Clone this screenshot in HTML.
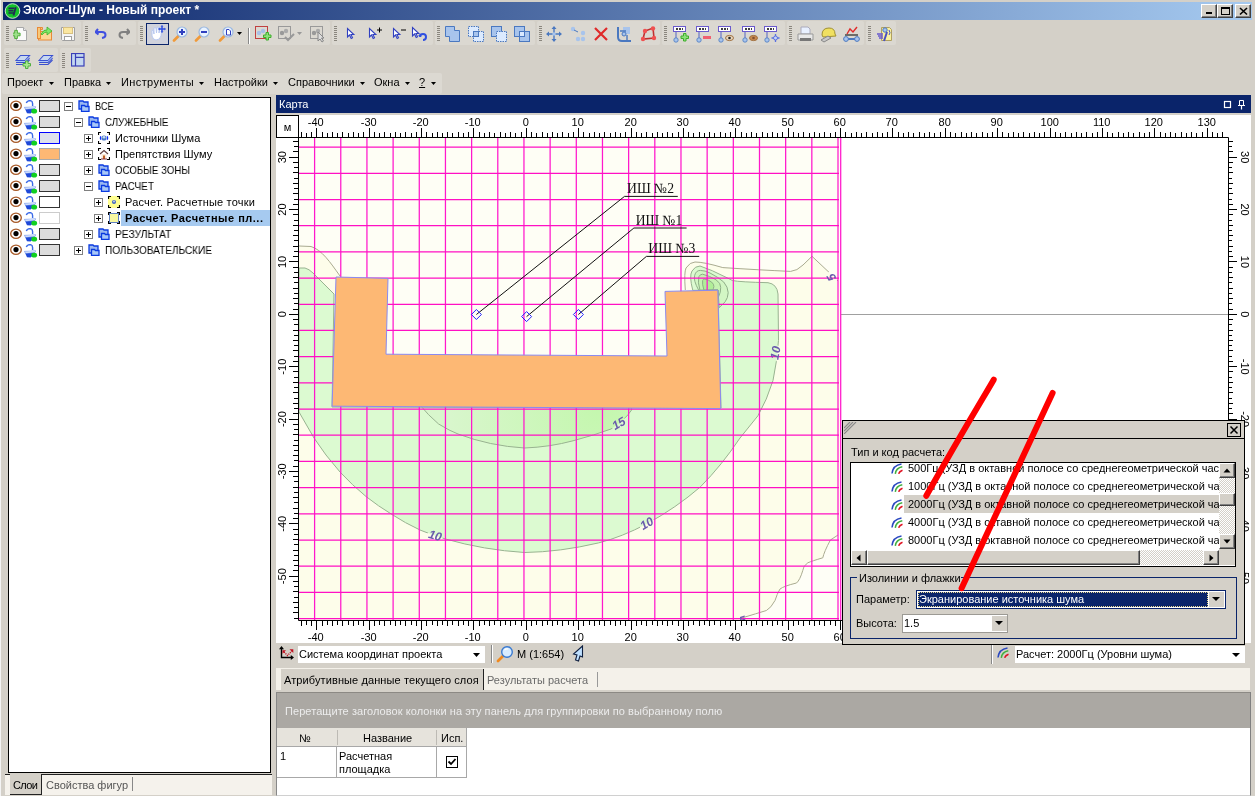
<!DOCTYPE html><html><head><meta charset="utf-8"><style>
*{box-sizing:border-box}
html,body{margin:0;padding:0}
body{width:1255px;height:797px;overflow:hidden;position:relative;background:#d4d0c8;font-family:"Liberation Sans",sans-serif;font-size:11px;color:#000}
.abs{position:absolute}
.t{position:absolute;white-space:nowrap;line-height:13px;will-change:transform}
</style></head><body>
<div class="abs" style="left:0;top:0;width:1px;height:797px;background:#f4f4f4"></div>
<div class="abs" style="left:3px;top:2px;width:1249px;height:18px;background:linear-gradient(to right,#0a246a,#a6caf0)"></div>
<svg class="abs" style="left:4px;top:3px" width="17" height="16" viewBox="0 0 17 16" ><circle cx="8.5" cy="8" r="7.3" fill="#13c12a" stroke="#c8e8c8" stroke-width="1"/><path d="M4.5 5.2h6M4.5 7.6h5M4.5 10h6" stroke="#222a55" stroke-width="1.6"/><path d="M11.8 4.2 L9.5 12.5" stroke="#222a55" stroke-width="1.8"/></svg>
<div class="t" style="left:23px;top:3px;color:#fff;font-weight:bold;font-size:12px;line-height:15px">Эколог-Шум - Новый проект *</div>
<div class="abs" style="left:1201px;top:4px;width:16px;height:14px;background:#d4d0c8;border-top:1px solid #fff;border-left:1px solid #fff;border-right:1px solid #404040;border-bottom:1px solid #404040;box-shadow:inset -1px -1px 0 #808080"><svg class="abs" style="left:3px;top:7px" width="8" height="3" viewBox="0 0 8 3" ><rect x="1" y="0" width="6" height="2" fill="#000"/></svg></div>
<div class="abs" style="left:1217px;top:4px;width:16px;height:14px;background:#d4d0c8;border-top:1px solid #fff;border-left:1px solid #fff;border-right:1px solid #404040;border-bottom:1px solid #404040;box-shadow:inset -1px -1px 0 #808080"><svg class="abs" style="left:2px;top:1px" width="10" height="10" viewBox="0 0 10 10" ><rect x="1.5" y="1.5" width="8" height="7" fill="none" stroke="#000" stroke-width="1"/><rect x="1" y="1" width="9" height="2" fill="#000"/></svg></div>
<div class="abs" style="left:1235px;top:4px;width:16px;height:14px;background:#d4d0c8;border-top:1px solid #fff;border-left:1px solid #fff;border-right:1px solid #404040;border-bottom:1px solid #404040;box-shadow:inset -1px -1px 0 #808080"><svg class="abs" style="left:3px;top:2px" width="9" height="9" viewBox="0 0 9 9" ><path d="M1 1L8 7.5M8 1L1 7.5" stroke="#000" stroke-width="1.6"/></svg></div>
<div class="abs" style="left:4px;top:21px;width:77px;height:24px;background:#dbd8d1;border-radius:2px"></div>
<svg class="abs" style="left:6px;top:26px" width="3" height="16" viewBox="0 0 3 16" ><rect x="0" y="0" width="3" height="1" fill="#8a867e"/><rect x="0" y="2" width="3" height="1" fill="#8a867e"/><rect x="0" y="4" width="3" height="1" fill="#8a867e"/><rect x="0" y="6" width="3" height="1" fill="#8a867e"/><rect x="0" y="8" width="3" height="1" fill="#8a867e"/><rect x="0" y="10" width="3" height="1" fill="#8a867e"/><rect x="0" y="12" width="3" height="1" fill="#8a867e"/><rect x="0" y="14" width="3" height="1" fill="#8a867e"/></svg>
<div class="abs" style="left:83px;top:21px;width:53px;height:24px;background:#dbd8d1;border-radius:2px"></div>
<svg class="abs" style="left:85px;top:26px" width="3" height="16" viewBox="0 0 3 16" ><rect x="0" y="0" width="3" height="1" fill="#8a867e"/><rect x="0" y="2" width="3" height="1" fill="#8a867e"/><rect x="0" y="4" width="3" height="1" fill="#8a867e"/><rect x="0" y="6" width="3" height="1" fill="#8a867e"/><rect x="0" y="8" width="3" height="1" fill="#8a867e"/><rect x="0" y="10" width="3" height="1" fill="#8a867e"/><rect x="0" y="12" width="3" height="1" fill="#8a867e"/><rect x="0" y="14" width="3" height="1" fill="#8a867e"/></svg>
<div class="abs" style="left:138px;top:21px;width:192px;height:24px;background:#dbd8d1;border-radius:2px"></div>
<svg class="abs" style="left:140px;top:26px" width="3" height="16" viewBox="0 0 3 16" ><rect x="0" y="0" width="3" height="1" fill="#8a867e"/><rect x="0" y="2" width="3" height="1" fill="#8a867e"/><rect x="0" y="4" width="3" height="1" fill="#8a867e"/><rect x="0" y="6" width="3" height="1" fill="#8a867e"/><rect x="0" y="8" width="3" height="1" fill="#8a867e"/><rect x="0" y="10" width="3" height="1" fill="#8a867e"/><rect x="0" y="12" width="3" height="1" fill="#8a867e"/><rect x="0" y="14" width="3" height="1" fill="#8a867e"/></svg>
<div class="abs" style="left:332px;top:21px;width:101px;height:24px;background:#dbd8d1;border-radius:2px"></div>
<svg class="abs" style="left:334px;top:26px" width="3" height="16" viewBox="0 0 3 16" ><rect x="0" y="0" width="3" height="1" fill="#8a867e"/><rect x="0" y="2" width="3" height="1" fill="#8a867e"/><rect x="0" y="4" width="3" height="1" fill="#8a867e"/><rect x="0" y="6" width="3" height="1" fill="#8a867e"/><rect x="0" y="8" width="3" height="1" fill="#8a867e"/><rect x="0" y="10" width="3" height="1" fill="#8a867e"/><rect x="0" y="12" width="3" height="1" fill="#8a867e"/><rect x="0" y="14" width="3" height="1" fill="#8a867e"/></svg>
<div class="abs" style="left:435px;top:21px;width:100px;height:24px;background:#dbd8d1;border-radius:2px"></div>
<svg class="abs" style="left:437px;top:26px" width="3" height="16" viewBox="0 0 3 16" ><rect x="0" y="0" width="3" height="1" fill="#8a867e"/><rect x="0" y="2" width="3" height="1" fill="#8a867e"/><rect x="0" y="4" width="3" height="1" fill="#8a867e"/><rect x="0" y="6" width="3" height="1" fill="#8a867e"/><rect x="0" y="8" width="3" height="1" fill="#8a867e"/><rect x="0" y="10" width="3" height="1" fill="#8a867e"/><rect x="0" y="12" width="3" height="1" fill="#8a867e"/><rect x="0" y="14" width="3" height="1" fill="#8a867e"/></svg>
<div class="abs" style="left:537px;top:21px;width:123px;height:24px;background:#dbd8d1;border-radius:2px"></div>
<svg class="abs" style="left:539px;top:26px" width="3" height="16" viewBox="0 0 3 16" ><rect x="0" y="0" width="3" height="1" fill="#8a867e"/><rect x="0" y="2" width="3" height="1" fill="#8a867e"/><rect x="0" y="4" width="3" height="1" fill="#8a867e"/><rect x="0" y="6" width="3" height="1" fill="#8a867e"/><rect x="0" y="8" width="3" height="1" fill="#8a867e"/><rect x="0" y="10" width="3" height="1" fill="#8a867e"/><rect x="0" y="12" width="3" height="1" fill="#8a867e"/><rect x="0" y="14" width="3" height="1" fill="#8a867e"/></svg>
<div class="abs" style="left:662px;top:21px;width:123px;height:24px;background:#dbd8d1;border-radius:2px"></div>
<svg class="abs" style="left:664px;top:26px" width="3" height="16" viewBox="0 0 3 16" ><rect x="0" y="0" width="3" height="1" fill="#8a867e"/><rect x="0" y="2" width="3" height="1" fill="#8a867e"/><rect x="0" y="4" width="3" height="1" fill="#8a867e"/><rect x="0" y="6" width="3" height="1" fill="#8a867e"/><rect x="0" y="8" width="3" height="1" fill="#8a867e"/><rect x="0" y="10" width="3" height="1" fill="#8a867e"/><rect x="0" y="12" width="3" height="1" fill="#8a867e"/><rect x="0" y="14" width="3" height="1" fill="#8a867e"/></svg>
<div class="abs" style="left:787px;top:21px;width:77px;height:24px;background:#dbd8d1;border-radius:2px"></div>
<svg class="abs" style="left:789px;top:26px" width="3" height="16" viewBox="0 0 3 16" ><rect x="0" y="0" width="3" height="1" fill="#8a867e"/><rect x="0" y="2" width="3" height="1" fill="#8a867e"/><rect x="0" y="4" width="3" height="1" fill="#8a867e"/><rect x="0" y="6" width="3" height="1" fill="#8a867e"/><rect x="0" y="8" width="3" height="1" fill="#8a867e"/><rect x="0" y="10" width="3" height="1" fill="#8a867e"/><rect x="0" y="12" width="3" height="1" fill="#8a867e"/><rect x="0" y="14" width="3" height="1" fill="#8a867e"/></svg>
<div class="abs" style="left:866px;top:21px;width:30px;height:24px;background:#dbd8d1;border-radius:2px"></div>
<svg class="abs" style="left:868px;top:26px" width="3" height="16" viewBox="0 0 3 16" ><rect x="0" y="0" width="3" height="1" fill="#8a867e"/><rect x="0" y="2" width="3" height="1" fill="#8a867e"/><rect x="0" y="4" width="3" height="1" fill="#8a867e"/><rect x="0" y="6" width="3" height="1" fill="#8a867e"/><rect x="0" y="8" width="3" height="1" fill="#8a867e"/><rect x="0" y="10" width="3" height="1" fill="#8a867e"/><rect x="0" y="12" width="3" height="1" fill="#8a867e"/><rect x="0" y="14" width="3" height="1" fill="#8a867e"/></svg>
<div class="abs" style="left:4px;top:48px;width:54px;height:24px;background:#dbd8d1;border-radius:2px"></div>
<svg class="abs" style="left:6px;top:53px" width="3" height="16" viewBox="0 0 3 16" ><rect x="0" y="0" width="3" height="1" fill="#8a867e"/><rect x="0" y="2" width="3" height="1" fill="#8a867e"/><rect x="0" y="4" width="3" height="1" fill="#8a867e"/><rect x="0" y="6" width="3" height="1" fill="#8a867e"/><rect x="0" y="8" width="3" height="1" fill="#8a867e"/><rect x="0" y="10" width="3" height="1" fill="#8a867e"/><rect x="0" y="12" width="3" height="1" fill="#8a867e"/><rect x="0" y="14" width="3" height="1" fill="#8a867e"/></svg>
<div class="abs" style="left:60px;top:48px;width:31px;height:24px;background:#dbd8d1;border-radius:2px"></div>
<svg class="abs" style="left:62px;top:53px" width="3" height="16" viewBox="0 0 3 16" ><rect x="0" y="0" width="3" height="1" fill="#8a867e"/><rect x="0" y="2" width="3" height="1" fill="#8a867e"/><rect x="0" y="4" width="3" height="1" fill="#8a867e"/><rect x="0" y="6" width="3" height="1" fill="#8a867e"/><rect x="0" y="8" width="3" height="1" fill="#8a867e"/><rect x="0" y="10" width="3" height="1" fill="#8a867e"/><rect x="0" y="12" width="3" height="1" fill="#8a867e"/><rect x="0" y="14" width="3" height="1" fill="#8a867e"/></svg>
<svg class="abs" style="left:13px;top:26px" width="16" height="16" viewBox="0 0 16 16" ><path d="M3.5 1.5h7l3 3v10h-10z" fill="#fafafa" stroke="#a8a8a8"/><path d="M10.5 1.5v3h3" fill="#e8e8e8" stroke="#a8a8a8"/><path d="M3 6h3v3h3v3h-3v3h-3v-3h-3v-3h3z" transform="translate(-1,-1) scale(0.9)" fill="#9de08a" stroke="#4aa832"/></svg>
<svg class="abs" style="left:37px;top:26px" width="16" height="16" viewBox="0 0 16 16" ><path d="M0.5 1.5h5v2h-5z" fill="#f8c878" stroke="#e88a38"/><rect x="1.5" y="5.5" width="13" height="8.5" fill="#fcd894" stroke="#e88a38"/><rect x="0.5" y="1.5" width="3" height="11" fill="#f8c878" stroke="#e88a38"/><path d="M4 8 Q7 3 10 4 L10 1 L15 5 L10 9 L10 6 Q7 6 5 9z" fill="#7ee86a" stroke="#3cb02a" stroke-width="0.8"/></svg>
<svg class="abs" style="left:60px;top:26px" width="16" height="16" viewBox="0 0 16 16" ><path d="M1.5 1.5h13v13h-12l-1-1z" fill="#f4f4f4" stroke="#a0a0a0"/><rect x="3.5" y="1.5" width="9" height="6" fill="#fbe7a0" stroke="#d8c080"/><rect x="4.5" y="10.5" width="7" height="4" fill="#fff" stroke="#a0a0a0"/></svg>
<svg class="abs" style="left:95px;top:27px" width="12" height="12" viewBox="0 0 12 12" ><path d="M3 2 L0.5 5 L3.5 7.5 M1 5 H7 Q10.5 5 10.5 8 Q10.5 10.5 7 11" fill="none" stroke="#4050e0" stroke-width="2"/></svg>
<svg class="abs" style="left:118px;top:27px" width="12" height="12" viewBox="0 0 12 12" ><path d="M9 2 L11.5 5 L8.5 7.5 M11 5 H5 Q1.5 5 1.5 8 Q1.5 10.5 5 11" fill="none" stroke="#808080" stroke-width="2"/></svg>
<div class="abs" style="left:146px;top:23px;width:23px;height:22px;background:#d0d2dc;border:1px solid #0a246a"></div>
<svg class="abs" style="left:149px;top:25px" width="18" height="17" viewBox="0 0 18 17" ><path d="M3 8 Q2 5 4 5 L5 9 L5 3 Q6 2 7 3 L7.5 8 L8 2.5 Q9 1.5 10 2.5 L10 8 L11 4 Q12 3.5 12.5 4.5 L12 11 Q11 15 7 15 Q4 15 3 11z" fill="#fff" stroke="#b8c8f0" stroke-width="1"/><path d="M13 1v6M10 4h6" stroke="#3050e0" stroke-width="1.5"/><path d="M13 0l-1.5 1.5h3zM13 8l-1.5-1.5h3zM9 4l1.5-1.5v3zM17 4l-1.5-1.5v3z" fill="#3050e0"/></svg>
<svg class="abs" style="left:172px;top:26px" width="16" height="16" viewBox="0 0 16 16" ><path d="M2 14.5 L6.5 10" stroke="#f09a3a" stroke-width="2.6" stroke-linecap="round"/><circle cx="10" cy="6" r="5" fill="#e8f2ff" stroke="#9ab8e0" stroke-width="1.2"/><path d="M10 3v6M7 6h6" stroke="#3040c0" stroke-width="2"/></svg>
<svg class="abs" style="left:194px;top:26px" width="16" height="16" viewBox="0 0 16 16" ><path d="M2 14.5 L6.5 10" stroke="#f09a3a" stroke-width="2.6" stroke-linecap="round"/><circle cx="10" cy="6" r="5" fill="#e8f2ff" stroke="#9ab8e0" stroke-width="1.2"/><path d="M7 6h6" stroke="#3040c0" stroke-width="2"/></svg>
<svg class="abs" style="left:218px;top:26px" width="16" height="16" viewBox="0 0 16 16" ><path d="M2 14.5 L6.5 10" stroke="#f09a3a" stroke-width="2.6" stroke-linecap="round"/><circle cx="10" cy="6" r="5" fill="#e8f2ff" stroke="#9ab8e0" stroke-width="1.2"/><path d="M8.5 3.5h2.5l1.5 1.5v4h-4z" fill="#fff" stroke="#3040c0"/></svg>
<svg class="abs" style="left:237px;top:32px" width="6" height="4" viewBox="0 0 6 4" ><path d="M0 0h5l-2.5 3z" fill="#000"/></svg>
<div class="abs" style="left:248px;top:28px;width:1px;height:16px;background:#888"></div><div class="abs" style="left:249px;top:28px;width:1px;height:16px;background:#fff"></div>
<svg class="abs" style="left:255px;top:26px" width="17" height="17" viewBox="0 0 17 17" ><rect x="0.5" y="0.5" width="12" height="12" fill="none" stroke="#c04040"/><circle cx="4" cy="7" r="2.2" fill="#a8c0e8"/><circle cx="8" cy="5" r="2.2" fill="#a8c0e8"/><path d="M10 9h2.5v-2.5h2.5v2.5h2.5v2.5h-2.5v2.5h-2.5v-2.5h-2.5z" transform="translate(-1.5,0)" fill="#8de07a" stroke="#3cae2a"/></svg>
<svg class="abs" style="left:278px;top:26px" width="17" height="17" viewBox="0 0 17 17" ><rect x="0.5" y="0.5" width="12" height="12" fill="none" stroke="#999"/><circle cx="4" cy="7" r="2.2" fill="#999"/><circle cx="8" cy="5" r="2.2" fill="#aaa"/><path d="M7 11 L10 14 L16 8" fill="none" stroke="#999" stroke-width="2"/></svg>
<svg class="abs" style="left:297px;top:32px" width="6" height="4" viewBox="0 0 6 4" ><path d="M0 0h5l-2.5 3z" fill="#999"/></svg>
<svg class="abs" style="left:310px;top:26px" width="17" height="17" viewBox="0 0 17 17" ><rect x="0.5" y="0.5" width="12" height="12" fill="none" stroke="#999"/><circle cx="4" cy="7" r="2.2" fill="#999"/><circle cx="8" cy="5" r="2.2" fill="#aaa"/><path d="M8 6 L8 15 L10 13 L12 16 L13.5 15 L11.5 12 L14 12z" fill="#ddd" stroke="#888"/></svg>
<svg class="abs" style="left:346px;top:27px" width="16" height="15" viewBox="0 0 16 15" ><path d="M1.5 1.5 L1.5 10 L3.5 8 L5.2 11.5 L6.5 10.8 L4.9 7.5 L7.8 7.5z" fill="#fff" stroke="#3040c0" stroke-width="1.1"/></svg>
<svg class="abs" style="left:368px;top:27px" width="16" height="15" viewBox="0 0 16 15" ><path d="M1.5 1.5 L1.5 10 L3.5 8 L5.2 11.5 L6.5 10.8 L4.9 7.5 L7.8 7.5z" fill="#fff" stroke="#3040c0" stroke-width="1.1"/><path d="M9 3h5M11.5 0.5v5" stroke="#000" stroke-width="1"/></svg>
<svg class="abs" style="left:392px;top:27px" width="16" height="15" viewBox="0 0 16 15" ><path d="M1.5 1.5 L1.5 10 L3.5 8 L5.2 11.5 L6.5 10.8 L4.9 7.5 L7.8 7.5z" fill="#fff" stroke="#3040c0" stroke-width="1.1"/><path d="M9 3h5" stroke="#000" stroke-width="1"/></svg>
<svg class="abs" style="left:411px;top:26px" width="18" height="17" viewBox="0 0 18 17" ><path d="M1.5 1.5 L1.5 10 L3.5 8 L5.2 11.5 L6.5 10.8 L4.9 7.5 L7.8 7.5z" fill="#fff" stroke="#3040c0" stroke-width="1.1"/><path d="M9 11 Q9 8 12 8 Q15 8 15 11 Q15 14 12 14" fill="none" stroke="#3050e0" stroke-width="2"/><path d="M7 10l2.5-2.5 1 3z" fill="#3050e0"/></svg>
<svg class="abs" style="left:445px;top:26px" width="17" height="17" viewBox="0 0 17 17" ><path d="M0.5 0.5h9v4h5v11h-10v-5h-4z" fill="#a8c4ec" stroke="#4a78c0"/></svg>
<svg class="abs" style="left:468px;top:26px" width="17" height="17" viewBox="0 0 17 17" ><rect x="0.5" y="0.5" width="10" height="10" fill="#dbeaff" stroke="#4a78c0" stroke-dasharray="1.5 1"/><rect x="5.5" y="5.5" width="10" height="10" fill="#dbeaff" stroke="#4a78c0" stroke-dasharray="1.5 1"/><rect x="5.5" y="5.5" width="5" height="5" fill="#a8c4ec" stroke="#4a78c0"/></svg>
<svg class="abs" style="left:491px;top:26px" width="17" height="17" viewBox="0 0 17 17" ><rect x="0.5" y="0.5" width="10" height="10" fill="#a8c4ec" stroke="#4a78c0"/><rect x="5.5" y="5.5" width="10" height="10" fill="#dbeaff" stroke="#4a78c0" stroke-dasharray="1.5 1"/></svg>
<svg class="abs" style="left:514px;top:26px" width="17" height="17" viewBox="0 0 17 17" ><rect x="0.5" y="0.5" width="10" height="10" fill="#a8c4ec" stroke="#4a78c0"/><rect x="5.5" y="5.5" width="10" height="10" fill="#a8c4ec" stroke="#4a78c0"/><rect x="5.5" y="5.5" width="5" height="5" fill="#dbeaff" stroke="#4a78c0"/></svg>
<svg class="abs" style="left:546px;top:26px" width="17" height="17" viewBox="0 0 17 17" ><path d="M8 1v14M1 8h14" stroke="#4a78c0" stroke-width="1.4"/><path d="M8 0l-2.5 3h5zM8 16l-2.5-3h5zM0 8l3-2.5v5zM16 8l-3-2.5v5z" fill="#4a78c0"/><circle cx="8" cy="8" r="1.8" fill="#a8c4ec"/></svg>
<svg class="abs" style="left:570px;top:26px" width="17" height="17" viewBox="0 0 17 17" ><circle cx="3" cy="3" r="2.2" fill="#a8c4ec"/><circle cx="13" cy="7" r="2.2" fill="#a8c4ec"/><circle cx="8" cy="13" r="2.2" fill="#a8c4ec"/><circle cx="13" cy="13" r="2.2" fill="#a8c4ec"/><path d="M4 4 L8 6" stroke="#4a78c0"/></svg>
<svg class="abs" style="left:593px;top:26px" width="17" height="17" viewBox="0 0 17 17" ><path d="M2 2 L14 14 M14 2 L2 14" stroke="#e02a2a" stroke-width="2.2"/></svg>
<svg class="abs" style="left:616px;top:26px" width="17" height="17" viewBox="0 0 17 17" ><path d="M2 1v10q0 4 4 4h9" fill="none" stroke="#4a78c0" stroke-width="2"/><rect x="7" y="1" width="7" height="7" fill="#a8c4ec"/><path d="M4 5h6M11 9v5" stroke="#4a78c0" stroke-width="1.4"/><circle cx="8" cy="8" r="2" fill="#a8c4ec" stroke="#4a78c0"/></svg>
<svg class="abs" style="left:640px;top:26px" width="17" height="17" viewBox="0 0 17 17" ><path d="M3 13 L5 5 L13 2 L14 12z" fill="none" stroke="#c03030" stroke-width="1.6"/><circle cx="3" cy="13" r="2.2" fill="#f05050"/><circle cx="5" cy="5" r="2.2" fill="#f05050"/><circle cx="13" cy="2.5" r="2.2" fill="#f05050"/><circle cx="14" cy="12" r="2.2" fill="#f05050"/></svg>
<svg class="abs" style="left:672px;top:26px" width="18" height="17" viewBox="0 0 18 17" ><rect x="1.5" y="0.5" width="12" height="5" fill="#fff" stroke="#6a5acd"/><path d="M4 3h7" stroke="#000" stroke-width="1.5" stroke-dasharray="2 1"/><path d="M4 6v8" stroke="#6a78c8" stroke-width="1.2"/><circle cx="4" cy="14" r="2.2" fill="#a8c4ec" stroke="#4a78c0" stroke-width="0.8"/><path d="M10 10h2.5v-2.5h2.5v2.5h2.5v2.5h-2.5v2.5h-2.5v-2.5h-2.5z" transform="translate(-1,0)" fill="#8de07a" stroke="#3cae2a"/></svg>
<svg class="abs" style="left:695px;top:26px" width="18" height="17" viewBox="0 0 18 17" ><rect x="1.5" y="0.5" width="12" height="5" fill="#fff" stroke="#6a5acd"/><path d="M4 3h7" stroke="#000" stroke-width="1.5" stroke-dasharray="2 1"/><path d="M4 6v8" stroke="#6a78c8" stroke-width="1.2"/><circle cx="4" cy="14" r="2.2" fill="#a8c4ec" stroke="#4a78c0" stroke-width="0.8"/><rect x="8" y="10" width="8" height="3" fill="#f06070"/></svg>
<svg class="abs" style="left:717px;top:26px" width="18" height="17" viewBox="0 0 18 17" ><rect x="1.5" y="0.5" width="12" height="5" fill="#fff" stroke="#6a5acd"/><path d="M4 3h7" stroke="#000" stroke-width="1.5" stroke-dasharray="2 1"/><path d="M4 6v8" stroke="#6a78c8" stroke-width="1.2"/><circle cx="4" cy="14" r="2.2" fill="#a8c4ec" stroke="#4a78c0" stroke-width="0.8"/><ellipse cx="12.5" cy="12" rx="4" ry="2.6" fill="#e8d8c0" stroke="#a07040"/><circle cx="12.5" cy="12" r="1.3" fill="#222"/></svg>
<svg class="abs" style="left:741px;top:26px" width="18" height="17" viewBox="0 0 18 17" ><rect x="1.5" y="0.5" width="12" height="5" fill="#fff" stroke="#6a5acd"/><path d="M4 3h7" stroke="#000" stroke-width="1.5" stroke-dasharray="2 1"/><path d="M4 6v8" stroke="#6a78c8" stroke-width="1.2"/><circle cx="4" cy="14" r="2.2" fill="#a8c4ec" stroke="#4a78c0" stroke-width="0.8"/><ellipse cx="12.5" cy="12" rx="4" ry="2.6" fill="#c88a50" stroke="#a07040"/><circle cx="12.5" cy="12" r="1.3" fill="#805030"/></svg>
<svg class="abs" style="left:763px;top:26px" width="18" height="17" viewBox="0 0 18 17" ><rect x="1.5" y="0.5" width="12" height="5" fill="#fff" stroke="#6a5acd"/><path d="M4 3h7" stroke="#000" stroke-width="1.5" stroke-dasharray="2 1"/><path d="M4 6v8" stroke="#6a78c8" stroke-width="1.2"/><circle cx="4" cy="14" r="2.2" fill="#a8c4ec" stroke="#4a78c0" stroke-width="0.8"/><path d="M12.5 8v8M8.5 12h8" stroke="#5a70e0" stroke-width="1.3"/><circle cx="12.5" cy="12" r="2" fill="#c8d4f8" stroke="#5a70e0"/></svg>
<svg class="abs" style="left:797px;top:26px" width="17" height="17" viewBox="0 0 17 17" ><path d="M4 1h7l2 2v5h-9z" fill="#e8f0ff" stroke="#aab"/><path d="M1 8h15v6h-15z" fill="#e8e8e8" stroke="#999"/><rect x="3" y="12" width="11" height="3" fill="#777"/></svg>
<svg class="abs" style="left:820px;top:26px" width="17" height="17" viewBox="0 0 17 17" ><path d="M2 9 Q2 2 9 2 Q15 2 15 8 L16 10 L3 11z" fill="#f0e060" stroke="#a09030"/><path d="M1 14 L8 10 L11 12 L4 16z" fill="#c8c8c8" stroke="#888"/></svg>
<svg class="abs" style="left:843px;top:26px" width="17" height="17" viewBox="0 0 17 17" ><path d="M4 8 L7 3 L10 6 L14 1" fill="none" stroke="#e02a2a" stroke-width="1.4"/><path d="M2 9h13" stroke="#000"/><path d="M3 13h11" stroke="#4a78c0" stroke-width="2"/><circle cx="3" cy="13" r="2.4" fill="#a8c4ec" stroke="#4a78c0"/><circle cx="14" cy="13" r="2.4" fill="#a8c4ec" stroke="#4a78c0"/></svg>
<svg class="abs" style="left:876px;top:26px" width="17" height="17" viewBox="0 0 17 17" ><path d="M5.5 1.5h8l2 2v11h-10z" fill="#f8f0a0" stroke="#b0a060"/><circle cx="9" cy="4" r="2.2" fill="#a8c4ec" stroke="#4a78c0"/><path d="M1 8h6M2 10h5M3 12h4" stroke="#6a5acd" stroke-width="1.3"/><path d="M11 6 L8 15" stroke="#4a50c0" stroke-width="2"/><path d="M13 4 q2 3 0 5" fill="none" stroke="#4a50c0"/></svg>
<svg class="abs" style="left:15px;top:54px" width="17" height="17" viewBox="0 0 17 17" ><path d="M1 6.5 L5.5 1.5 H14.5 L10 6.5z" fill="#c8d8f0" stroke="#3a50d0" stroke-width="1.1"/><path d="M1 8.5H10L14.5 4" fill="none" stroke="#3a50d0" stroke-width="1.2"/><path d="M1 10.5H10L14.5 6" fill="none" stroke="#3a50d0" stroke-width="1.2"/><path d="M1.5 7.5H10L14 3.5" fill="none" stroke="#a8c8f8" stroke-width="0.9"/><path d="M8 9.5h2.5v-2.5h2.5v2.5h2.5v2.5h-2.5v2.5h-2.5v-2.5h-2.5z" fill="#a8e890" stroke="#50b040"/></svg>
<svg class="abs" style="left:38px;top:54px" width="16" height="14" viewBox="0 0 16 14" ><path d="M1 6.5 L5.5 1.5 H14.5 L10 6.5z" fill="#c8d8f0" stroke="#3a50d0" stroke-width="1.1"/><path d="M1 8.5H10L14.5 4" fill="none" stroke="#3a50d0" stroke-width="1.2"/><path d="M1 10.5H10L14.5 6" fill="none" stroke="#3a50d0" stroke-width="1.2"/><path d="M1.5 7.5H10L14 3.5" fill="none" stroke="#a8c8f8" stroke-width="0.9"/></svg>
<svg class="abs" style="left:71px;top:53px" width="15" height="15" viewBox="0 0 15 15" ><rect x="0.5" y="0.5" width="12.5" height="12.5" fill="#c4d8f0" stroke="#3a40b8" stroke-width="1.2"/><path d="M4.5 4.3h8.5M4.5 0.5v12.5" stroke="#3a40b8" stroke-width="1.2"/></svg>
<div class="abs" style="left:2px;top:73px;width:440px;height:21px;background:#dcd9d2;border-radius:2px"></div>
<div class="t" style="left:7.4px;top:76px;letter-spacing:0px">Проект</div>
<svg class="abs" style="left:49px;top:82px" width="6" height="4" viewBox="0 0 6 4" ><path d="M0 0h5l-2.5 3z" fill="#000"/></svg>
<div class="t" style="left:63.5px;top:76px;letter-spacing:0px">Правка</div>
<svg class="abs" style="left:106px;top:82px" width="6" height="4" viewBox="0 0 6 4" ><path d="M0 0h5l-2.5 3z" fill="#000"/></svg>
<div class="t" style="left:121.0px;top:76px;letter-spacing:0.4px">Инструменты</div>
<svg class="abs" style="left:199px;top:82px" width="6" height="4" viewBox="0 0 6 4" ><path d="M0 0h5l-2.5 3z" fill="#000"/></svg>
<div class="t" style="left:213.5px;top:76px;letter-spacing:0px">Настройки</div>
<svg class="abs" style="left:273px;top:82px" width="6" height="4" viewBox="0 0 6 4" ><path d="M0 0h5l-2.5 3z" fill="#000"/></svg>
<div class="t" style="left:288.0px;top:76px;letter-spacing:0px">Справочники</div>
<svg class="abs" style="left:360px;top:82px" width="6" height="4" viewBox="0 0 6 4" ><path d="M0 0h5l-2.5 3z" fill="#000"/></svg>
<div class="t" style="left:374.0px;top:76px;letter-spacing:0px">Окна</div>
<svg class="abs" style="left:405px;top:82px" width="6" height="4" viewBox="0 0 6 4" ><path d="M0 0h5l-2.5 3z" fill="#000"/></svg>
<div class="t" style="left:419.0px;top:76px;text-decoration:underline">?</div>
<svg class="abs" style="left:431px;top:82px" width="6" height="4" viewBox="0 0 6 4" ><path d="M0 0h5l-2.5 3z" fill="#000"/></svg>
<div class="abs" style="left:8px;top:97px;width:263px;height:676px;background:#fff;border:1px solid #000"></div>
<svg class="abs" style="left:10px;top:100px" width="13" height="12" viewBox="0 0 13 12" ><ellipse cx="6" cy="5.7" rx="5.3" ry="4.6" fill="#fff" stroke="#a85a28" stroke-width="1.35"/><circle cx="6" cy="5.6" r="2.6" fill="#000"/></svg>
<svg class="abs" style="left:24px;top:100px" width="14" height="14" viewBox="0 0 14 14" ><path d="M2.3 3 Q3 0.6 6.2 0.6 Q8.6 0.8 8.6 3.5 V6" fill="none" stroke="#3a6ae8" stroke-width="1.4"/><path d="M0.4 7.3 L11.8 6.8 L9 11.5 L6.5 13.5 L3 13.3z" fill="#1e48d8"/><path d="M0.4 7.3 L11.8 6.8 L11 8.6 L1.5 9.2z" fill="#e6eeff" stroke="#8aa8f0" stroke-width="0.6"/><ellipse cx="10.2" cy="11.2" rx="2.9" ry="2.4" fill="#10d020"/></svg>
<div class="abs" style="left:39px;top:100px;width:21px;height:12px;background:#dcdcdc;border:1px solid #333"></div>
<svg class="abs" style="left:64px;top:102px" width="9" height="9" viewBox="0 0 9 9" ><rect x="0.5" y="0.5" width="8" height="8" fill="#fff" stroke="#808080"/><path d="M2 4.5h5" stroke="#000"/></svg>
<svg class="abs" style="left:78px;top:100px" width="12" height="12" viewBox="0 0 12 12" ><path d="M1 1h4l1 1h4v7h-9z" fill="#9ab8f0" stroke="#0a3ae0" stroke-width="1.3"/><path d="M3.5 5.5h3l1 1h3.5v5h-7.5z" fill="#a8c8f8" stroke="#0a3ae0" stroke-width="1.3"/></svg>
<div class="t" style="left:94.6px;top:100px;letter-spacing:0px;transform:scaleX(0.835);transform-origin:0 0">ВСЕ</div>
<svg class="abs" style="left:10px;top:116px" width="13" height="12" viewBox="0 0 13 12" ><ellipse cx="6" cy="5.7" rx="5.3" ry="4.6" fill="#fff" stroke="#a85a28" stroke-width="1.35"/><circle cx="6" cy="5.6" r="2.6" fill="#000"/></svg>
<svg class="abs" style="left:24px;top:116px" width="14" height="14" viewBox="0 0 14 14" ><path d="M2.3 3 Q3 0.6 6.2 0.6 Q8.6 0.8 8.6 3.5 V6" fill="none" stroke="#3a6ae8" stroke-width="1.4"/><path d="M0.4 7.3 L11.8 6.8 L9 11.5 L6.5 13.5 L3 13.3z" fill="#1e48d8"/><path d="M0.4 7.3 L11.8 6.8 L11 8.6 L1.5 9.2z" fill="#e6eeff" stroke="#8aa8f0" stroke-width="0.6"/><ellipse cx="10.2" cy="11.2" rx="2.9" ry="2.4" fill="#10d020"/></svg>
<div class="abs" style="left:39px;top:116px;width:21px;height:12px;background:#dcdcdc;border:1px solid #333"></div>
<svg class="abs" style="left:74px;top:118px" width="9" height="9" viewBox="0 0 9 9" ><rect x="0.5" y="0.5" width="8" height="8" fill="#fff" stroke="#808080"/><path d="M2 4.5h5" stroke="#000"/></svg>
<svg class="abs" style="left:88px;top:116px" width="12" height="12" viewBox="0 0 12 12" ><path d="M1 1h4l1 1h4v7h-9z" fill="#9ab8f0" stroke="#0a3ae0" stroke-width="1.3"/><path d="M3.5 5.5h3l1 1h3.5v5h-7.5z" fill="#a8c8f8" stroke="#0a3ae0" stroke-width="1.3"/></svg>
<div class="t" style="left:104.6px;top:116px;letter-spacing:0px;transform:scaleX(0.885);transform-origin:0 0">СЛУЖЕБНЫЕ</div>
<svg class="abs" style="left:10px;top:132px" width="13" height="12" viewBox="0 0 13 12" ><ellipse cx="6" cy="5.7" rx="5.3" ry="4.6" fill="#fff" stroke="#a85a28" stroke-width="1.35"/><circle cx="6" cy="5.6" r="2.6" fill="#000"/></svg>
<svg class="abs" style="left:24px;top:132px" width="14" height="14" viewBox="0 0 14 14" ><path d="M2.3 3 Q3 0.6 6.2 0.6 Q8.6 0.8 8.6 3.5 V6" fill="none" stroke="#3a6ae8" stroke-width="1.4"/><path d="M0.4 7.3 L11.8 6.8 L9 11.5 L6.5 13.5 L3 13.3z" fill="#1e48d8"/><path d="M0.4 7.3 L11.8 6.8 L11 8.6 L1.5 9.2z" fill="#e6eeff" stroke="#8aa8f0" stroke-width="0.6"/><ellipse cx="10.2" cy="11.2" rx="2.9" ry="2.4" fill="#10d020"/></svg>
<div class="abs" style="left:39px;top:132px;width:21px;height:12px;background:#dde0ec;border:1px solid #0000ff"></div>
<svg class="abs" style="left:84px;top:134px" width="9" height="9" viewBox="0 0 9 9" ><rect x="0.5" y="0.5" width="8" height="8" fill="#fff" stroke="#808080"/><path d="M2 4.5h5" stroke="#000"/><path d="M4.5 2v5" stroke="#000"/></svg>
<svg class="abs" style="left:98px;top:132px" width="12" height="12" viewBox="0 0 12 12" ><path d="M0.5 3V0.5H3M9 0.5h2.5V3M11.5 9v2.5H9M3 11.5H0.5V9" fill="none" stroke="#000" stroke-width="1.2"/><circle cx="6" cy="6" r="2.6" fill="#4a7ac8"/><circle cx="6" cy="5.3" r="1.3" fill="#cde"/><path d="M2.8 4.2 Q1.6 6 2.8 7.8M9.2 4.2 Q10.4 6 9.2 7.8" fill="none" stroke="#0020ff" stroke-width="1.1"/></svg>
<div class="t" style="left:114.6px;top:132px;letter-spacing:0px">Источники Шума</div>
<svg class="abs" style="left:10px;top:148px" width="13" height="12" viewBox="0 0 13 12" ><ellipse cx="6" cy="5.7" rx="5.3" ry="4.6" fill="#fff" stroke="#a85a28" stroke-width="1.35"/><circle cx="6" cy="5.6" r="2.6" fill="#000"/></svg>
<svg class="abs" style="left:24px;top:148px" width="14" height="14" viewBox="0 0 14 14" ><path d="M2.3 3 Q3 0.6 6.2 0.6 Q8.6 0.8 8.6 3.5 V6" fill="none" stroke="#3a6ae8" stroke-width="1.4"/><path d="M0.4 7.3 L11.8 6.8 L9 11.5 L6.5 13.5 L3 13.3z" fill="#1e48d8"/><path d="M0.4 7.3 L11.8 6.8 L11 8.6 L1.5 9.2z" fill="#e6eeff" stroke="#8aa8f0" stroke-width="0.6"/><ellipse cx="10.2" cy="11.2" rx="2.9" ry="2.4" fill="#10d020"/></svg>
<div class="abs" style="left:39px;top:148px;width:21px;height:12px;background:#fdb874;border:1px solid #aaa"></div>
<svg class="abs" style="left:84px;top:150px" width="9" height="9" viewBox="0 0 9 9" ><rect x="0.5" y="0.5" width="8" height="8" fill="#fff" stroke="#808080"/><path d="M2 4.5h5" stroke="#000"/><path d="M4.5 2v5" stroke="#000"/></svg>
<svg class="abs" style="left:98px;top:148px" width="12" height="12" viewBox="0 0 12 12" ><path d="M0.5 3V0.5H3M9 0.5h2.5V3M11.5 9v2.5H9M3 11.5H0.5V9" fill="none" stroke="#000" stroke-width="1.2"/><path d="M2 6 L6 2.5 L10 6" fill="none" stroke="#604040" stroke-width="1.2"/><rect x="3.5" y="6" width="5" height="5" fill="#f8e8d8"/><rect x="5" y="7.5" width="2" height="3.5" fill="#c06020"/><path d="M3 11h6" stroke="#803040"/></svg>
<div class="t" style="left:114.6px;top:148px;letter-spacing:0px">Препятствия Шуму</div>
<svg class="abs" style="left:10px;top:164px" width="13" height="12" viewBox="0 0 13 12" ><ellipse cx="6" cy="5.7" rx="5.3" ry="4.6" fill="#fff" stroke="#a85a28" stroke-width="1.35"/><circle cx="6" cy="5.6" r="2.6" fill="#000"/></svg>
<svg class="abs" style="left:24px;top:164px" width="14" height="14" viewBox="0 0 14 14" ><path d="M2.3 3 Q3 0.6 6.2 0.6 Q8.6 0.8 8.6 3.5 V6" fill="none" stroke="#3a6ae8" stroke-width="1.4"/><path d="M0.4 7.3 L11.8 6.8 L9 11.5 L6.5 13.5 L3 13.3z" fill="#1e48d8"/><path d="M0.4 7.3 L11.8 6.8 L11 8.6 L1.5 9.2z" fill="#e6eeff" stroke="#8aa8f0" stroke-width="0.6"/><ellipse cx="10.2" cy="11.2" rx="2.9" ry="2.4" fill="#10d020"/></svg>
<div class="abs" style="left:39px;top:164px;width:21px;height:12px;background:#dcdcdc;border:1px solid #333"></div>
<svg class="abs" style="left:84px;top:166px" width="9" height="9" viewBox="0 0 9 9" ><rect x="0.5" y="0.5" width="8" height="8" fill="#fff" stroke="#808080"/><path d="M2 4.5h5" stroke="#000"/><path d="M4.5 2v5" stroke="#000"/></svg>
<svg class="abs" style="left:98px;top:164px" width="12" height="12" viewBox="0 0 12 12" ><path d="M1 1h4l1 1h4v7h-9z" fill="#9ab8f0" stroke="#0a3ae0" stroke-width="1.3"/><path d="M3.5 5.5h3l1 1h3.5v5h-7.5z" fill="#a8c8f8" stroke="#0a3ae0" stroke-width="1.3"/></svg>
<div class="t" style="left:114.6px;top:164px;letter-spacing:0px;transform:scaleX(0.883);transform-origin:0 0">ОСОБЫЕ ЗОНЫ</div>
<svg class="abs" style="left:10px;top:180px" width="13" height="12" viewBox="0 0 13 12" ><ellipse cx="6" cy="5.7" rx="5.3" ry="4.6" fill="#fff" stroke="#a85a28" stroke-width="1.35"/><circle cx="6" cy="5.6" r="2.6" fill="#000"/></svg>
<svg class="abs" style="left:24px;top:180px" width="14" height="14" viewBox="0 0 14 14" ><path d="M2.3 3 Q3 0.6 6.2 0.6 Q8.6 0.8 8.6 3.5 V6" fill="none" stroke="#3a6ae8" stroke-width="1.4"/><path d="M0.4 7.3 L11.8 6.8 L9 11.5 L6.5 13.5 L3 13.3z" fill="#1e48d8"/><path d="M0.4 7.3 L11.8 6.8 L11 8.6 L1.5 9.2z" fill="#e6eeff" stroke="#8aa8f0" stroke-width="0.6"/><ellipse cx="10.2" cy="11.2" rx="2.9" ry="2.4" fill="#10d020"/></svg>
<div class="abs" style="left:39px;top:180px;width:21px;height:12px;background:#dcdcdc;border:1px solid #333"></div>
<svg class="abs" style="left:84px;top:182px" width="9" height="9" viewBox="0 0 9 9" ><rect x="0.5" y="0.5" width="8" height="8" fill="#fff" stroke="#808080"/><path d="M2 4.5h5" stroke="#000"/></svg>
<svg class="abs" style="left:98px;top:180px" width="12" height="12" viewBox="0 0 12 12" ><path d="M1 1h4l1 1h4v7h-9z" fill="#9ab8f0" stroke="#0a3ae0" stroke-width="1.3"/><path d="M3.5 5.5h3l1 1h3.5v5h-7.5z" fill="#a8c8f8" stroke="#0a3ae0" stroke-width="1.3"/></svg>
<div class="t" style="left:114.6px;top:180px;letter-spacing:0px;transform:scaleX(0.914);transform-origin:0 0">РАСЧЕТ</div>
<svg class="abs" style="left:10px;top:196px" width="13" height="12" viewBox="0 0 13 12" ><ellipse cx="6" cy="5.7" rx="5.3" ry="4.6" fill="#fff" stroke="#a85a28" stroke-width="1.35"/><circle cx="6" cy="5.6" r="2.6" fill="#000"/></svg>
<svg class="abs" style="left:24px;top:196px" width="14" height="14" viewBox="0 0 14 14" ><path d="M2.3 3 Q3 0.6 6.2 0.6 Q8.6 0.8 8.6 3.5 V6" fill="none" stroke="#3a6ae8" stroke-width="1.4"/><path d="M0.4 7.3 L11.8 6.8 L9 11.5 L6.5 13.5 L3 13.3z" fill="#1e48d8"/><path d="M0.4 7.3 L11.8 6.8 L11 8.6 L1.5 9.2z" fill="#e6eeff" stroke="#8aa8f0" stroke-width="0.6"/><ellipse cx="10.2" cy="11.2" rx="2.9" ry="2.4" fill="#10d020"/></svg>
<div class="abs" style="left:39px;top:196px;width:21px;height:12px;background:#fff;border:1px solid #333"></div>
<svg class="abs" style="left:94px;top:198px" width="9" height="9" viewBox="0 0 9 9" ><rect x="0.5" y="0.5" width="8" height="8" fill="#fff" stroke="#808080"/><path d="M2 4.5h5" stroke="#000"/><path d="M4.5 2v5" stroke="#000"/></svg>
<svg class="abs" style="left:108px;top:196px" width="12" height="12" viewBox="0 0 12 12" ><rect x="0" y="0" width="12" height="12" fill="#ffff90"/><path d="M0.5 3V0.5H3M9 0.5h2.5V3M11.5 9v2.5H9M3 11.5H0.5V9" fill="none" stroke="#000" stroke-width="1.2"/><circle cx="6" cy="6" r="2" fill="#3a60c0"/><circle cx="6" cy="5.5" r="0.9" fill="#cde"/></svg>
<div class="t" style="left:124.6px;top:196px;letter-spacing:0.2px">Расчет. Расчетные точки</div>
<svg class="abs" style="left:10px;top:212px" width="13" height="12" viewBox="0 0 13 12" ><ellipse cx="6" cy="5.7" rx="5.3" ry="4.6" fill="#fff" stroke="#a85a28" stroke-width="1.35"/><circle cx="6" cy="5.6" r="2.6" fill="#000"/></svg>
<svg class="abs" style="left:24px;top:212px" width="14" height="14" viewBox="0 0 14 14" ><path d="M2.3 3 Q3 0.6 6.2 0.6 Q8.6 0.8 8.6 3.5 V6" fill="none" stroke="#3a6ae8" stroke-width="1.4"/><path d="M0.4 7.3 L11.8 6.8 L9 11.5 L6.5 13.5 L3 13.3z" fill="#1e48d8"/><path d="M0.4 7.3 L11.8 6.8 L11 8.6 L1.5 9.2z" fill="#e6eeff" stroke="#8aa8f0" stroke-width="0.6"/><ellipse cx="10.2" cy="11.2" rx="2.9" ry="2.4" fill="#10d020"/></svg>
<div class="abs" style="left:39px;top:212px;width:21px;height:12px;background:#fff;border:1px solid #ccc"></div>
<svg class="abs" style="left:94px;top:214px" width="9" height="9" viewBox="0 0 9 9" ><rect x="0.5" y="0.5" width="8" height="8" fill="#fff" stroke="#808080"/><path d="M2 4.5h5" stroke="#000"/><path d="M4.5 2v5" stroke="#000"/></svg>
<svg class="abs" style="left:108px;top:212px" width="12" height="12" viewBox="0 0 12 12" ><path d="M0.5 3V0.5H3M9 0.5h2.5V3M11.5 9v2.5H9M3 11.5H0.5V9" fill="none" stroke="#000" stroke-width="1.2"/><rect x="1.5" y="1.5" width="9" height="9" fill="#f8f8a0" stroke="#6080c0"/></svg>
<div class="abs" style="left:121px;top:210px;width:149px;height:16px;background:#a6caf0"></div>
<div class="t" style="left:124.6px;top:212px;font-weight:bold;letter-spacing:0.5px">Расчет. Расчетные пл...</div>
<svg class="abs" style="left:10px;top:228px" width="13" height="12" viewBox="0 0 13 12" ><ellipse cx="6" cy="5.7" rx="5.3" ry="4.6" fill="#fff" stroke="#a85a28" stroke-width="1.35"/><circle cx="6" cy="5.6" r="2.6" fill="#000"/></svg>
<svg class="abs" style="left:24px;top:228px" width="14" height="14" viewBox="0 0 14 14" ><path d="M2.3 3 Q3 0.6 6.2 0.6 Q8.6 0.8 8.6 3.5 V6" fill="none" stroke="#3a6ae8" stroke-width="1.4"/><path d="M0.4 7.3 L11.8 6.8 L9 11.5 L6.5 13.5 L3 13.3z" fill="#1e48d8"/><path d="M0.4 7.3 L11.8 6.8 L11 8.6 L1.5 9.2z" fill="#e6eeff" stroke="#8aa8f0" stroke-width="0.6"/><ellipse cx="10.2" cy="11.2" rx="2.9" ry="2.4" fill="#10d020"/></svg>
<div class="abs" style="left:39px;top:228px;width:21px;height:12px;background:#dcdcdc;border:1px solid #333"></div>
<svg class="abs" style="left:84px;top:230px" width="9" height="9" viewBox="0 0 9 9" ><rect x="0.5" y="0.5" width="8" height="8" fill="#fff" stroke="#808080"/><path d="M2 4.5h5" stroke="#000"/><path d="M4.5 2v5" stroke="#000"/></svg>
<svg class="abs" style="left:98px;top:228px" width="12" height="12" viewBox="0 0 12 12" ><path d="M1 1h4l1 1h4v7h-9z" fill="#9ab8f0" stroke="#0a3ae0" stroke-width="1.3"/><path d="M3.5 5.5h3l1 1h3.5v5h-7.5z" fill="#a8c8f8" stroke="#0a3ae0" stroke-width="1.3"/></svg>
<div class="t" style="left:114.6px;top:228px;letter-spacing:0px;transform:scaleX(0.933);transform-origin:0 0">РЕЗУЛЬТАТ</div>
<svg class="abs" style="left:10px;top:244px" width="13" height="12" viewBox="0 0 13 12" ><ellipse cx="6" cy="5.7" rx="5.3" ry="4.6" fill="#fff" stroke="#a85a28" stroke-width="1.35"/><circle cx="6" cy="5.6" r="2.6" fill="#000"/></svg>
<svg class="abs" style="left:24px;top:244px" width="14" height="14" viewBox="0 0 14 14" ><path d="M2.3 3 Q3 0.6 6.2 0.6 Q8.6 0.8 8.6 3.5 V6" fill="none" stroke="#3a6ae8" stroke-width="1.4"/><path d="M0.4 7.3 L11.8 6.8 L9 11.5 L6.5 13.5 L3 13.3z" fill="#1e48d8"/><path d="M0.4 7.3 L11.8 6.8 L11 8.6 L1.5 9.2z" fill="#e6eeff" stroke="#8aa8f0" stroke-width="0.6"/><ellipse cx="10.2" cy="11.2" rx="2.9" ry="2.4" fill="#10d020"/></svg>
<div class="abs" style="left:39px;top:244px;width:21px;height:12px;background:#dcdcdc;border:1px solid #333"></div>
<svg class="abs" style="left:74px;top:246px" width="9" height="9" viewBox="0 0 9 9" ><rect x="0.5" y="0.5" width="8" height="8" fill="#fff" stroke="#808080"/><path d="M2 4.5h5" stroke="#000"/><path d="M4.5 2v5" stroke="#000"/></svg>
<svg class="abs" style="left:88px;top:244px" width="12" height="12" viewBox="0 0 12 12" ><path d="M1 1h4l1 1h4v7h-9z" fill="#9ab8f0" stroke="#0a3ae0" stroke-width="1.3"/><path d="M3.5 5.5h3l1 1h3.5v5h-7.5z" fill="#a8c8f8" stroke="#0a3ae0" stroke-width="1.3"/></svg>
<div class="t" style="left:104.6px;top:244px;letter-spacing:0px;transform:scaleX(0.914);transform-origin:0 0">ПОЛЬЗОВАТЕЛЬСКИЕ</div>
<div class="abs" style="left:5px;top:774px;width:267px;height:21px;background:#f5f2ec;border-top:1px solid #222"></div>
<div class="abs" style="left:10px;top:774px;width:32px;height:21px;background:#d4d0c8;border-right:1px solid #222;border-bottom:1px solid #222"></div>
<div class="t" style="left:12.8px;top:779px;letter-spacing:-0.6px">Слои</div>
<div class="t" style="left:45.7px;top:779px;color:#555">Свойства фигур</div>
<div class="abs" style="left:132px;top:777px;width:1px;height:14px;background:#888"></div>
<div class="abs" style="left:276px;top:95px;width:975px;height:18px;background:#0a246a"></div>
<div class="t" style="left:279.4px;top:98px;color:#fff">Карта</div>
<svg class="abs" style="left:1223px;top:100px" width="9" height="9" viewBox="0 0 9 9" ><rect x="1.5" y="1.5" width="6" height="6" fill="none" stroke="#fff" stroke-width="1.2"/></svg>
<svg class="abs" style="left:1237px;top:100px" width="9" height="10" viewBox="0 0 9 10" ><path d="M2.5 0.5h4v5h-4z" fill="none" stroke="#fff"/><path d="M1 5.5h7M4.5 5.5v4" stroke="#fff" stroke-width="1.2"/></svg>
<div class="abs" style="left:276px;top:115px;width:975px;height:528px;background:#fff"></div>
<svg class="abs" style="left:0;top:0" width="1255" height="797" viewBox="0 0 1255 797"><defs><clipPath id="mv"><rect x="299" y="138" width="929" height="482"/></clipPath><radialGradient id="g15" gradientUnits="userSpaceOnUse" cx="600" cy="408" r="150"><stop offset="0" stop-color="#c4f7ae"/><stop offset="1" stop-color="#d8f6cc"/></radialGradient><mask id="lm" maskUnits="userSpaceOnUse" x="0" y="0" width="1255" height="797"><rect x="0" y="0" width="1255" height="797" fill="#fff"/><ellipse cx="832" cy="277" rx="6" ry="6" fill="#000"/><ellipse cx="776" cy="353" rx="5" ry="8" fill="#000"/><ellipse cx="619" cy="424" rx="8" ry="5" transform="rotate(-30 619 424)" fill="#000"/><ellipse cx="647" cy="524" rx="8" ry="5" transform="rotate(-30 647 524)" fill="#000"/><ellipse cx="435" cy="536" rx="8" ry="5" transform="rotate(15 435 536)" fill="#000"/></mask><clipPath id="gv"><rect x="299" y="138" width="543" height="482"/></clipPath></defs><g clip-path="url(#mv)"><path d="M841 314.5H1228" stroke="#a0a0a0" stroke-width="1"/></g><g clip-path="url(#gv)"><rect x="299" y="138" width="541" height="482" fill="#fefef4"/><rect x="299" y="138" width="541" height="482" fill="#fdfdea"/><path d="M299 138 H840 V282 L830.7 273.9 L812 256.3 L803 265 Q797 271 790.6 271.4 L722.8 267.6 Q704 262 695 262 Q684 264 685.3 272 L686.8 291 L667 291 L667 356 L386 354 L388 278 L340 276 C330 262 322 250 313 247 L299 246 Z" fill="#fefef5"/><path d="M840 535 L830.4 540 Q824 552 822.8 557.8 Q812 561 807.8 562.8 Q803 566 802.8 570.4 Q800 580 796.5 583 Q784 586 780 589 Q777 594 775 600.5 Q771 608 766.4 610.5 Q755 614 745 617 L740 619 H840Z" fill="#fefef6"/><path d="M299 268 L305 268 Q309 269 313 273 L334 294 L332 407 L721 408 L718 290 L692.8 290.4 Q689 276 692 271 Q695 266 700 266 Q712 270 725 276.8 L732.7 280.6 Q740 282 768 282.7 Q777 284 778 294 L778.5 340.4 Q777 362 773 380.5 Q767 400 758 415.7 L740 438 Q722 465 700.6 486.7 Q676 508 647 523.7 Q622 537 598.6 542.9 Q560 552 524.5 552.5 Q484 550 445.5 539 Q432 535 420 530 Q405 523 392 514.5 Q378 506 366 496.5 Q352 485 340 472 Q325 455 314 438 L299 412 Z" fill="#dcfad1"/><path d="M420 405 Q428 415 438.6 424 Q450 431 458 434 Q490 446 524.5 448 Q550 447 573 440.8 Q595 435 611 429 Q625 420 631.6 410 L631.6 405 Z" fill="url(#g15)"/><path d="M698.8 290.4 Q693 280 694.7 275.3 Q696 270.4 700.3 270.4 Q705 270.5 710 273 Q718 277 723.7 282 Q728 287 728.2 292.6 Q728 298 725.2 301.7 Q722 305 719.2 307.7 L718 290z" fill="#d2f6c4"/><path d="M700 290.4 Q697.5 282 698.8 276.8 Q700 274.2 702.6 274.2 Q710 276 716 279.8 Q721 283 720.7 287.4 Q721 292 718.4 297.2 L718 290z" fill="#c6f3b2"/><path d="M704 290.4 Q702 284 702.6 280.6 Q703 279 704.8 279.1 Q709 280 711.6 282.1 Q714 284 713.9 286.6 Q713.5 289 712.4 290.4z" fill="#b0ee98"/><g mask="url(#lm)"><path d="M299 246 L311 246.5 C322 250 330 262 340 276" fill="none" stroke="#a9aa90" stroke-width="1"/><path d="M685.3 290 Q684 272 686 268 Q690 262 695 262 Q704 262 722.8 267.6 Q760 270 790.6 271.4 Q797 271 803 265 L812 256.3 L830.7 273.9 L838 281" fill="none" stroke="#a9aa90" stroke-width="1"/><path d="M838 535 L830.4 540 Q824 552 822.8 557.8 Q812 561 807.8 562.8 Q803 566 802.8 570.4 Q800 580 796.5 583 Q784 586 780 589 Q777 594 775 600.5 Q771 608 766.4 610.5 Q755 614 745 617 L740 619" fill="none" stroke="#a9aa90" stroke-width="1"/><path d="M299 268 L305 268 Q309 269 313 273 L334 294 L332 407 L721 408 L718 290 L692.8 290.4 Q689 276 692 271 Q695 266 700 266 Q712 270 725 276.8 L732.7 280.6 Q740 282 768 282.7 Q777 284 778 294 L778.5 340.4 Q777 362 773 380.5 Q767 400 758 415.7 L740 438 Q722 465 700.6 486.7 Q676 508 647 523.7 Q622 537 598.6 542.9 Q560 552 524.5 552.5 Q484 550 445.5 539 Q432 535 420 530 Q405 523 392 514.5 Q378 506 366 496.5 Q352 485 340 472 Q325 455 314 438 L299 412 Z" fill="none" stroke="#98b290" stroke-width="1"/><path d="M420 405 Q428 415 438.6 424 Q450 431 458 434 Q490 446 524.5 448 Q550 447 573 440.8 Q595 435 611 429 Q625 420 631.6 410 L631.6 405 Z" fill="none" stroke="#98b290" stroke-width="1"/><path d="M698.8 290.4 Q693 280 694.7 275.3 Q696 270.4 700.3 270.4 Q705 270.5 710 273 Q718 277 723.7 282 Q728 287 728.2 292.6 Q728 298 725.2 301.7 Q722 305 719.2 307.7 L718 290z" fill="none" stroke="#8fae88" stroke-width="1"/><path d="M700 290.4 Q697.5 282 698.8 276.8 Q700 274.2 702.6 274.2 Q710 276 716 279.8 Q721 283 720.7 287.4 Q721 292 718.4 297.2 L718 290z" fill="none" stroke="#8fae88" stroke-width="1"/><path d="M704 290.4 Q702 284 702.6 280.6 Q703 279 704.8 279.1 Q709 280 711.6 282.1 Q714 284 713.9 286.6 Q713.5 289 712.4 290.4z" fill="none" stroke="#8fae88" stroke-width="1"/></g><path d="M314.60 138V620 M340.77 138V620 M366.94 138V620 M393.11 138V620 M419.28 138V620 M445.45 138V620 M471.62 138V620 M497.79 138V620 M523.96 138V620 M550.13 138V620 M576.30 138V620 M602.47 138V620 M628.64 138V620 M654.81 138V620 M680.98 138V620 M707.15 138V620 M733.32 138V620 M759.49 138V620 M785.66 138V620 M811.83 138V620 M838.00 138V620" stroke="#ff18cc" stroke-width="1.25"/><path d="M840.7 138V620" stroke="#ff18cc" stroke-width="1.25"/><path d="M299 147.15H839 M299 173.34H839 M299 199.53H839 M299 225.72H839 M299 251.91H839 M299 278.10H839 M299 304.29H839 M299 330.48H839 M299 356.67H839 M299 382.86H839 M299 409.05H839 M299 435.24H839 M299 461.43H839 M299 487.62H839 M299 513.81H839 M299 540.00H839 M299 566.19H839 M299 592.38H839 M299 618.57H839" stroke="#ff10c4" stroke-width="1.25"/><path d="M336 277 L388 278.4 L386 354.2 L667 356 L665 291.4 L717.8 290.2 L720.8 408.6 L332.1 406.2 Z" fill="#fdb874" stroke="#8a8af0" stroke-width="1"/><text x="832" y="280.5" transform="rotate(-120 832 277)" text-anchor="middle" font-family="Liberation Sans" font-size="12" font-weight="bold" font-style="italic" fill="#6a5cac">5</text><text x="776" y="356.5" transform="rotate(-80 776 353)" text-anchor="middle" font-family="Liberation Sans" font-size="12" font-weight="bold" font-style="italic" fill="#6a5cac">10</text><text x="619" y="427.5" transform="rotate(-30 619 424)" text-anchor="middle" font-family="Liberation Sans" font-size="12" font-weight="bold" font-style="italic" fill="#6a5cac">15</text><text x="647" y="527.5" transform="rotate(-30 647 524)" text-anchor="middle" font-family="Liberation Sans" font-size="12" font-weight="bold" font-style="italic" fill="#6a5cac">10</text><text x="435" y="539.5" transform="rotate(15 435 536)" text-anchor="middle" font-family="Liberation Sans" font-size="12" font-weight="bold" font-style="italic" fill="#6a5cac">10</text><text x="743" y="624.5" transform="rotate(-20 743 621)" text-anchor="middle" font-family="Liberation Sans" font-size="12" font-weight="bold" font-style="italic" fill="#6a5cac">5</text></g><path d="M476.4 314.5 L624.5 196.4 H677.8" fill="none" stroke="#111" stroke-width="1"/><path d="M471.4 314.5 L476.4 309.5 L481.4 314.5 L476.4 319.5Z" fill="none" stroke="#2020ff" stroke-width="1"/><text x="627" y="192.9" font-family="Liberation Serif" font-size="14" fill="#111" textLength="47" lengthAdjust="spacingAndGlyphs">ИШ №2</text><path d="M526.6 316.6 L633.9 228 H686.6" fill="none" stroke="#111" stroke-width="1"/><path d="M521.6 316.6 L526.6 311.6 L531.6 316.6 L526.6 321.6Z" fill="none" stroke="#2020ff" stroke-width="1"/><text x="635.8" y="224.6" font-family="Liberation Serif" font-size="14" fill="#111" textLength="46.4" lengthAdjust="spacingAndGlyphs">ИШ №1</text><path d="M578.4 314.5 L646.4 256.4 H699.2" fill="none" stroke="#111" stroke-width="1"/><path d="M573.4 314.5 L578.4 309.5 L583.4 314.5 L578.4 319.5Z" fill="none" stroke="#2020ff" stroke-width="1"/><text x="648.3" y="252.8" font-family="Liberation Serif" font-size="14" fill="#111" textLength="47" lengthAdjust="spacingAndGlyphs">ИШ №3</text><rect x="276.5" y="115.5" width="22" height="22" fill="#fff" stroke="#000"/><text x="287.5" y="131" text-anchor="middle" font-family="Liberation Sans" font-size="11">м</text><path d="M298.5 137.5H1228.5V620.5H298.5Z" fill="none" stroke="#000"/><path d="M301.5 132V137M301.5 620V626 M306.5 133V137M306.5 620V625 M311.5 132V137M311.5 620V626 M316.5 128V137M316.5 620V630 M322.5 132V137M322.5 620V626 M327.5 133V137M327.5 620V625 M332.5 132V137M332.5 620V626 M337.5 133V137M337.5 620V625 M342.5 132V137M342.5 620V626 M348.5 133V137M348.5 620V625 M353.5 132V137M353.5 620V626 M358.5 133V137M358.5 620V625 M363.5 132V137M363.5 620V626 M369.5 128V137M369.5 620V630 M374.5 132V137M374.5 620V626 M379.5 133V137M379.5 620V625 M384.5 132V137M384.5 620V626 M390.5 133V137M390.5 620V625 M395.5 132V137M395.5 620V626 M400.5 133V137M400.5 620V625 M405.5 132V137M405.5 620V626 M411.5 133V137M411.5 620V625 M416.5 132V137M416.5 620V626 M421.5 128V137M421.5 620V630 M426.5 132V137M426.5 620V626 M432.5 133V137M432.5 620V625 M437.5 132V137M437.5 620V626 M442.5 133V137M442.5 620V625 M447.5 132V137M447.5 620V626 M452.5 133V137M452.5 620V625 M458.5 132V137M458.5 620V626 M463.5 133V137M463.5 620V625 M468.5 132V137M468.5 620V626 M473.5 128V137M473.5 620V630 M479.5 132V137M479.5 620V626 M484.5 133V137M484.5 620V625 M489.5 132V137M489.5 620V626 M494.5 133V137M494.5 620V625 M500.5 132V137M500.5 620V626 M505.5 133V137M505.5 620V625 M510.5 132V137M510.5 620V626 M515.5 133V137M515.5 620V625 M521.5 132V137M521.5 620V626 M526.5 128V137M526.5 620V630 M531.5 132V137M531.5 620V626 M536.5 133V137M536.5 620V625 M542.5 132V137M542.5 620V626 M547.5 133V137M547.5 620V625 M552.5 132V137M552.5 620V626 M557.5 133V137M557.5 620V625 M562.5 132V137M562.5 620V626 M568.5 133V137M568.5 620V625 M573.5 132V137M573.5 620V626 M578.5 128V137M578.5 620V630 M583.5 132V137M583.5 620V626 M589.5 133V137M589.5 620V625 M594.5 132V137M594.5 620V626 M599.5 133V137M599.5 620V625 M604.5 132V137M604.5 620V626 M610.5 133V137M610.5 620V625 M615.5 132V137M615.5 620V626 M620.5 133V137M620.5 620V625 M625.5 132V137M625.5 620V626 M631.5 128V137M631.5 620V630 M636.5 132V137M636.5 620V626 M641.5 133V137M641.5 620V625 M646.5 132V137M646.5 620V626 M652.5 133V137M652.5 620V625 M657.5 132V137M657.5 620V626 M662.5 133V137M662.5 620V625 M667.5 132V137M667.5 620V626 M672.5 133V137M672.5 620V625 M678.5 132V137M678.5 620V626 M683.5 128V137M683.5 620V630 M688.5 132V137M688.5 620V626 M693.5 133V137M693.5 620V625 M699.5 132V137M699.5 620V626 M704.5 133V137M704.5 620V625 M709.5 132V137M709.5 620V626 M714.5 133V137M714.5 620V625 M720.5 132V137M720.5 620V626 M725.5 133V137M725.5 620V625 M730.5 132V137M730.5 620V626 M735.5 128V137M735.5 620V630 M741.5 132V137M741.5 620V626 M746.5 133V137M746.5 620V625 M751.5 132V137M751.5 620V626 M756.5 133V137M756.5 620V625 M762.5 132V137M762.5 620V626 M767.5 133V137M767.5 620V625 M772.5 132V137M772.5 620V626 M777.5 133V137M777.5 620V625 M782.5 132V137M782.5 620V626 M788.5 128V137M788.5 620V630 M793.5 132V137M793.5 620V626 M798.5 133V137M798.5 620V625 M803.5 132V137M803.5 620V626 M809.5 133V137M809.5 620V625 M814.5 132V137M814.5 620V626 M819.5 133V137M819.5 620V625 M824.5 132V137M824.5 620V626 M830.5 133V137M830.5 620V625 M835.5 132V137M835.5 620V626 M840.5 128V137M840.5 620V630 M845.5 132V137M845.5 620V626 M851.5 133V137M851.5 620V625 M856.5 132V137M856.5 620V626 M861.5 133V137M861.5 620V625 M866.5 132V137M866.5 620V626 M872.5 133V137M872.5 620V625 M877.5 132V137M877.5 620V626 M882.5 133V137M882.5 620V625 M887.5 132V137M887.5 620V626 M892.5 128V137M892.5 620V630 M898.5 132V137M898.5 620V626 M903.5 133V137M903.5 620V625 M908.5 132V137M908.5 620V626 M913.5 133V137M913.5 620V625 M919.5 132V137M919.5 620V626 M924.5 133V137M924.5 620V625 M929.5 132V137M929.5 620V626 M934.5 133V137M934.5 620V625 M940.5 132V137M940.5 620V626 M945.5 128V137M945.5 620V630 M950.5 132V137M950.5 620V626 M955.5 133V137M955.5 620V625 M961.5 132V137M961.5 620V626 M966.5 133V137M966.5 620V625 M971.5 132V137M971.5 620V626 M976.5 133V137M976.5 620V625 M982.5 132V137M982.5 620V626 M987.5 133V137M987.5 620V625 M992.5 132V137M992.5 620V626 M997.5 128V137M997.5 620V630 M1002.5 132V137M1002.5 620V626 M1008.5 133V137M1008.5 620V625 M1013.5 132V137M1013.5 620V626 M1018.5 133V137M1018.5 620V625 M1023.5 132V137M1023.5 620V626 M1029.5 133V137M1029.5 620V625 M1034.5 132V137M1034.5 620V626 M1039.5 133V137M1039.5 620V625 M1044.5 132V137M1044.5 620V626 M1050.5 128V137M1050.5 620V630 M1055.5 132V137M1055.5 620V626 M1060.5 133V137M1060.5 620V625 M1065.5 132V137M1065.5 620V626 M1071.5 133V137M1071.5 620V625 M1076.5 132V137M1076.5 620V626 M1081.5 133V137M1081.5 620V625 M1086.5 132V137M1086.5 620V626 M1092.5 133V137M1092.5 620V625 M1097.5 132V137M1097.5 620V626 M1102.5 128V137M1102.5 620V630 M1107.5 132V137M1107.5 620V626 M1112.5 133V137M1112.5 620V625 M1118.5 132V137M1118.5 620V626 M1123.5 133V137M1123.5 620V625 M1128.5 132V137M1128.5 620V626 M1133.5 133V137M1133.5 620V625 M1139.5 132V137M1139.5 620V626 M1144.5 133V137M1144.5 620V625 M1149.5 132V137M1149.5 620V626 M1154.5 128V137M1154.5 620V630 M1160.5 132V137M1160.5 620V626 M1165.5 133V137M1165.5 620V625 M1170.5 132V137M1170.5 620V626 M1175.5 133V137M1175.5 620V625 M1181.5 132V137M1181.5 620V626 M1186.5 133V137M1186.5 620V625 M1191.5 132V137M1191.5 620V626 M1196.5 133V137M1196.5 620V625 M1202.5 132V137M1202.5 620V626 M1207.5 128V137M1207.5 620V630 M1212.5 132V137M1212.5 620V626 M1217.5 133V137M1217.5 620V625 M1222.5 132V137M1222.5 620V626 M294 618.5H298M1228 618.5H1232 M293 612.5H298M1228 612.5H1233 M294 607.5H298M1228 607.5H1232 M293 602.5H298M1228 602.5H1233 M294 597.5H298M1228 597.5H1232 M293 591.5H298M1228 591.5H1233 M294 586.5H298M1228 586.5H1232 M293 581.5H298M1228 581.5H1233 M289 576.5H298M1228 576.5H1237 M293 570.5H298M1228 570.5H1233 M294 565.5H298M1228 565.5H1232 M293 560.5H298M1228 560.5H1233 M294 555.5H298M1228 555.5H1232 M293 550.5H298M1228 550.5H1233 M294 544.5H298M1228 544.5H1232 M293 539.5H298M1228 539.5H1233 M294 534.5H298M1228 534.5H1232 M293 529.5H298M1228 529.5H1233 M289 523.5H298M1228 523.5H1237 M293 518.5H298M1228 518.5H1233 M294 513.5H298M1228 513.5H1232 M293 508.5H298M1228 508.5H1233 M294 502.5H298M1228 502.5H1232 M293 497.5H298M1228 497.5H1233 M294 492.5H298M1228 492.5H1232 M293 487.5H298M1228 487.5H1233 M294 481.5H298M1228 481.5H1232 M293 476.5H298M1228 476.5H1233 M289 471.5H298M1228 471.5H1237 M293 466.5H298M1228 466.5H1233 M294 460.5H298M1228 460.5H1232 M293 455.5H298M1228 455.5H1233 M294 450.5H298M1228 450.5H1232 M293 445.5H298M1228 445.5H1233 M294 440.5H298M1228 440.5H1232 M293 434.5H298M1228 434.5H1233 M294 429.5H298M1228 429.5H1232 M293 424.5H298M1228 424.5H1233 M289 419.5H298M1228 419.5H1237 M293 413.5H298M1228 413.5H1233 M294 408.5H298M1228 408.5H1232 M293 403.5H298M1228 403.5H1233 M294 398.5H298M1228 398.5H1232 M293 392.5H298M1228 392.5H1233 M294 387.5H298M1228 387.5H1232 M293 382.5H298M1228 382.5H1233 M294 377.5H298M1228 377.5H1232 M293 371.5H298M1228 371.5H1233 M289 366.5H298M1228 366.5H1237 M293 361.5H298M1228 361.5H1233 M294 356.5H298M1228 356.5H1232 M293 350.5H298M1228 350.5H1233 M294 345.5H298M1228 345.5H1232 M293 340.5H298M1228 340.5H1233 M294 335.5H298M1228 335.5H1232 M293 330.5H298M1228 330.5H1233 M294 324.5H298M1228 324.5H1232 M293 319.5H298M1228 319.5H1233 M289 314.5H298M1228 314.5H1237 M293 309.5H298M1228 309.5H1233 M294 303.5H298M1228 303.5H1232 M293 298.5H298M1228 298.5H1233 M294 293.5H298M1228 293.5H1232 M293 288.5H298M1228 288.5H1233 M294 282.5H298M1228 282.5H1232 M293 277.5H298M1228 277.5H1233 M294 272.5H298M1228 272.5H1232 M293 267.5H298M1228 267.5H1233 M289 261.5H298M1228 261.5H1237 M293 256.5H298M1228 256.5H1233 M294 251.5H298M1228 251.5H1232 M293 246.5H298M1228 246.5H1233 M294 240.5H298M1228 240.5H1232 M293 235.5H298M1228 235.5H1233 M294 230.5H298M1228 230.5H1232 M293 225.5H298M1228 225.5H1233 M294 220.5H298M1228 220.5H1232 M293 214.5H298M1228 214.5H1233 M289 209.5H298M1228 209.5H1237 M293 204.5H298M1228 204.5H1233 M294 199.5H298M1228 199.5H1232 M293 193.5H298M1228 193.5H1233 M294 188.5H298M1228 188.5H1232 M293 183.5H298M1228 183.5H1233 M294 178.5H298M1228 178.5H1232 M293 172.5H298M1228 172.5H1233 M294 167.5H298M1228 167.5H1232 M293 162.5H298M1228 162.5H1233 M289 157.5H298M1228 157.5H1237 M293 151.5H298M1228 151.5H1233 M294 146.5H298M1228 146.5H1232 M293 141.5H298M1228 141.5H1233" stroke="#000" stroke-width="1"/><g font-family="Liberation Sans" font-size="11" fill="#000"><text x="315.7" y="126" text-anchor="middle">-40</text><text x="315.7" y="641" text-anchor="middle">-40</text><text x="368.7" y="126" text-anchor="middle">-30</text><text x="368.7" y="641" text-anchor="middle">-30</text><text x="420.7" y="126" text-anchor="middle">-20</text><text x="420.7" y="641" text-anchor="middle">-20</text><text x="472.7" y="126" text-anchor="middle">-10</text><text x="472.7" y="641" text-anchor="middle">-10</text><text x="525.7" y="126" text-anchor="middle">0</text><text x="525.7" y="641" text-anchor="middle">0</text><text x="577.7" y="126" text-anchor="middle">10</text><text x="577.7" y="641" text-anchor="middle">10</text><text x="630.7" y="126" text-anchor="middle">20</text><text x="630.7" y="641" text-anchor="middle">20</text><text x="682.7" y="126" text-anchor="middle">30</text><text x="682.7" y="641" text-anchor="middle">30</text><text x="734.7" y="126" text-anchor="middle">40</text><text x="734.7" y="641" text-anchor="middle">40</text><text x="787.7" y="126" text-anchor="middle">50</text><text x="787.7" y="641" text-anchor="middle">50</text><text x="839.7" y="126" text-anchor="middle">60</text><text x="839.7" y="641" text-anchor="middle">60</text><text x="891.7" y="126" text-anchor="middle">70</text><text x="944.7" y="126" text-anchor="middle">80</text><text x="996.7" y="126" text-anchor="middle">90</text><text x="1049.7" y="126" text-anchor="middle">100</text><text x="1101.7" y="126" text-anchor="middle">110</text><text x="1153.7" y="126" text-anchor="middle">120</text><text x="1206.7" y="126" text-anchor="middle">130</text><text x="0" y="0" transform="translate(286 576.2) rotate(-90)" text-anchor="middle">-50</text><text x="0" y="0" transform="translate(1241 576.2) rotate(90)" text-anchor="middle">-50</text><text x="0" y="0" transform="translate(286 523.8) rotate(-90)" text-anchor="middle">-40</text><text x="0" y="0" transform="translate(1241 523.8) rotate(90)" text-anchor="middle">-40</text><text x="0" y="0" transform="translate(286 471.4) rotate(-90)" text-anchor="middle">-30</text><text x="0" y="0" transform="translate(1241 471.4) rotate(90)" text-anchor="middle">-30</text><text x="0" y="0" transform="translate(286 419.1) rotate(-90)" text-anchor="middle">-20</text><text x="0" y="0" transform="translate(1241 419.1) rotate(90)" text-anchor="middle">-20</text><text x="0" y="0" transform="translate(286 366.7) rotate(-90)" text-anchor="middle">-10</text><text x="0" y="0" transform="translate(1241 366.7) rotate(90)" text-anchor="middle">-10</text><text x="0" y="0" transform="translate(286 314.3) rotate(-90)" text-anchor="middle">0</text><text x="0" y="0" transform="translate(1241 314.3) rotate(90)" text-anchor="middle">0</text><text x="0" y="0" transform="translate(286 261.9) rotate(-90)" text-anchor="middle">10</text><text x="0" y="0" transform="translate(1241 261.9) rotate(90)" text-anchor="middle">10</text><text x="0" y="0" transform="translate(286 209.5) rotate(-90)" text-anchor="middle">20</text><text x="0" y="0" transform="translate(1241 209.5) rotate(90)" text-anchor="middle">20</text><text x="0" y="0" transform="translate(286 157.2) rotate(-90)" text-anchor="middle">30</text><text x="0" y="0" transform="translate(1241 157.2) rotate(90)" text-anchor="middle">30</text></g></svg>
<svg class="abs" style="left:279px;top:646px" width="16" height="15" viewBox="0 0 16 15" ><path d="M2.5 2V11.5H13" fill="none" stroke="#000" stroke-width="1.4"/><path d="M2.5 0L0 3.2H5z M15 11.5L11.8 9V14z" fill="#000"/><path d="M5 6 L8.5 9.5 L12.8 5.2" fill="none" stroke="#c01020" stroke-width="1.3" stroke-dasharray="1.2 0.9"/><path d="M3.5 4.2H7L3.5 7.7z M14.3 3.2V7L10.5 3.2z" fill="#c01020"/></svg>
<div class="abs" style="left:298px;top:646px;width:187px;height:17px;background:#fff"></div>
<div class="t" style="left:299px;top:648px">Система координат проекта</div>
<svg class="abs" style="left:473px;top:653px" width="8" height="5" viewBox="0 0 8 5" ><path d="M0 0h7l-3.5 4z" fill="#000"/></svg>
<div class="abs" style="left:491px;top:645px;width:1px;height:18px;background:#888"></div><div class="abs" style="left:492px;top:645px;width:1px;height:18px;background:#fff"></div>
<svg class="abs" style="left:496px;top:645px" width="18" height="18" viewBox="0 0 18 18" ><path d="M2 16 L7 11" stroke="#f08a20" stroke-width="2.8" stroke-linecap="round"/><circle cx="11" cy="7" r="5.3" fill="#d8ecff" stroke="#3a7ad0" stroke-width="1.4"/><path d="M8.5 5 Q10 3.5 12 4" fill="none" stroke="#fff" stroke-width="1.2"/></svg>
<div class="t" style="left:516.7px;top:648px">М (1:654)</div>
<svg class="abs" style="left:572px;top:645px" width="12" height="17" viewBox="0 0 12 17" ><path d="M10.5 1 L1.5 9 L5 10 L3.5 15 L6.5 16 L8 11 L10.5 12z" fill="#bfe0ff" stroke="#102040" stroke-width="1.1"/></svg>
<div class="abs" style="left:991px;top:645px;width:1px;height:19px;background:#888"></div><div class="abs" style="left:992px;top:645px;width:1px;height:19px;background:#fff"></div>
<svg class="abs" style="left:997px;top:647px" width="12" height="12" viewBox="0 0 12 12" ><path d="M1 10.5 Q1.8 2.2 10.5 0.9" fill="none" stroke="#2a48c0" stroke-width="1.5"/><path d="M4.3 10.8 Q5 5 11.3 3.8" fill="none" stroke="#40b040" stroke-width="1.5"/><path d="M7.6 10.8 Q8.6 8.2 11.5 7.2" fill="none" stroke="#e01020" stroke-width="1.6"/></svg>
<div class="abs" style="left:1015px;top:646px;width:230px;height:17px;background:#fff"></div>
<div class="t" style="left:1016px;top:648px">Расчет: 2000Гц (Уровни шума)</div>
<svg class="abs" style="left:1232px;top:653px" width="9" height="5" viewBox="0 0 9 5" ><path d="M0 0h8l-4 4z" fill="#000"/></svg>
<div class="abs" style="left:276px;top:668px;width:974px;height:22px;background:#f4f1ea"></div>
<div class="abs" style="left:281px;top:669px;width:203px;height:21px;background:#d4d0c8;border-right:1px solid #222"></div>
<div class="t" style="left:283.7px;top:674px;letter-spacing:0.1px">Атрибутивные данные текущего слоя</div>
<div class="t" style="left:487.3px;top:674px;color:#6a6a6a">Результаты расчета</div>
<div class="abs" style="left:597px;top:672px;width:1px;height:15px;background:#999"></div>
<div class="abs" style="left:276px;top:692px;width:975px;height:104px;background:#fff;border-left:1px solid #888;border-right:1px solid #808080;border-bottom:1px solid #d0d0d0"></div>
<div class="abs" style="left:277px;top:692px;width:973px;height:36px;background:#aba8a3;border-top:1px solid #8c8984"></div>
<div class="t" style="left:284.7px;top:705px;color:#ececec;letter-spacing:0.065px">Перетащите заголовок колонки на эту панель для группировки по выбранному полю</div>
<div class="abs" style="left:277px;top:728px;width:190px;height:19px;background:#e6e3dc;border-bottom:1px solid #a8a8a8"></div>
<div class="abs" style="left:337px;top:730px;width:1px;height:15px;background:#bdbab4"></div><div class="abs" style="left:436px;top:730px;width:1px;height:15px;background:#bdbab4"></div>
<div class="abs" style="left:466px;top:728px;width:1px;height:50px;background:#a8a8a8"></div>
<div class="t" style="left:299px;top:732px">№</div>
<div class="t" style="left:362.9px;top:732px">Название</div>
<div class="t" style="left:440.7px;top:732px">Исп.</div>
<div class="abs" style="left:336px;top:747px;width:1px;height:31px;background:#a8a8a8"></div><div class="abs" style="left:436px;top:747px;width:1px;height:31px;background:#a8a8a8"></div>
<div class="abs" style="left:277px;top:777px;width:190px;height:1px;background:#a8a8a8"></div>
<div class="t" style="left:279.7px;top:750px">1</div>
<div class="t" style="left:338.6px;top:750px">Расчетная</div>
<div class="t" style="left:338.6px;top:763px">площадка</div>
<svg class="abs" style="left:446px;top:756px" width="12" height="12" viewBox="0 0 12 12" ><rect x="0.5" y="0.5" width="11" height="11" fill="#fff" stroke="#000"/><path d="M2.5 5.5 L5 8 L9.5 3" fill="none" stroke="#000" stroke-width="1.8"/></svg>
<div class="abs" style="left:0;top:796px;width:1255px;height:1px;background:#fff"></div>
<div class="abs" style="left:842px;top:420px;width:403px;height:225px;background:#d4d0c8;border:1px solid #000"></div>
<div class="abs" style="left:843px;top:438px;width:401px;height:1px;background:#000"></div>
<svg class="abs" style="left:844px;top:422px" width="13" height="12" viewBox="0 0 13 12" ><path d="M0 6L6 0M0 9L9 0M0 12L12 0" stroke="#888" stroke-width="1.1"/></svg>
<div class="abs" style="left:1227px;top:423px;width:14px;height:14px;border:1px solid #000;background:#d4d0c8"></div>
<svg class="abs" style="left:1229px;top:425px" width="10" height="10" viewBox="0 0 10 10" ><path d="M1.5 1.5L8.5 8.5M8.5 1.5L1.5 8.5" stroke="#000" stroke-width="1.5"/></svg>
<div class="t" style="left:851px;top:446px">Тип и код расчета:</div>
<div class="abs" style="left:850px;top:462px;width:386px;height:105px;background:#fff;border:1px solid #000;overflow:hidden"><div class="abs" style="left:53px;top:32px;width:316px;height:18px;background:#d4d0c8"></div><svg class="abs" style="left:40px;top:0px" width="12" height="12" viewBox="0 0 12 12" ><path d="M1 10.5 Q1.8 2.2 10.5 0.9" fill="none" stroke="#2a48c0" stroke-width="1.5"/><path d="M4.3 10.8 Q5 5 11.3 3.8" fill="none" stroke="#40b040" stroke-width="1.5"/><path d="M7.6 10.8 Q8.6 8.2 11.5 7.2" fill="none" stroke="#e01020" stroke-width="1.6"/></svg><div class="t" style="left:57px;top:-1px">500Гц (УЗД в октавной полосе со среднегеометрической частотой 500Гц)</div><svg class="abs" style="left:40px;top:18px" width="12" height="12" viewBox="0 0 12 12" ><path d="M1 10.5 Q1.8 2.2 10.5 0.9" fill="none" stroke="#2a48c0" stroke-width="1.5"/><path d="M4.3 10.8 Q5 5 11.3 3.8" fill="none" stroke="#40b040" stroke-width="1.5"/><path d="M7.6 10.8 Q8.6 8.2 11.5 7.2" fill="none" stroke="#e01020" stroke-width="1.6"/></svg><div class="t" style="left:57px;top:17px">1000Гц (УЗД в октавной полосе со среднегеометрической частотой)</div><svg class="abs" style="left:40px;top:36px" width="12" height="12" viewBox="0 0 12 12" ><path d="M1 10.5 Q1.8 2.2 10.5 0.9" fill="none" stroke="#2a48c0" stroke-width="1.5"/><path d="M4.3 10.8 Q5 5 11.3 3.8" fill="none" stroke="#40b040" stroke-width="1.5"/><path d="M7.6 10.8 Q8.6 8.2 11.5 7.2" fill="none" stroke="#e01020" stroke-width="1.6"/></svg><div class="t" style="left:57px;top:35px">2000Гц (УЗД в октавной полосе со среднегеометрической частотой)</div><svg class="abs" style="left:40px;top:54px" width="12" height="12" viewBox="0 0 12 12" ><path d="M1 10.5 Q1.8 2.2 10.5 0.9" fill="none" stroke="#2a48c0" stroke-width="1.5"/><path d="M4.3 10.8 Q5 5 11.3 3.8" fill="none" stroke="#40b040" stroke-width="1.5"/><path d="M7.6 10.8 Q8.6 8.2 11.5 7.2" fill="none" stroke="#e01020" stroke-width="1.6"/></svg><div class="t" style="left:57px;top:53px">4000Гц (УЗД в октавной полосе со среднегеометрической частотой)</div><svg class="abs" style="left:40px;top:72px" width="12" height="12" viewBox="0 0 12 12" ><path d="M1 10.5 Q1.8 2.2 10.5 0.9" fill="none" stroke="#2a48c0" stroke-width="1.5"/><path d="M4.3 10.8 Q5 5 11.3 3.8" fill="none" stroke="#40b040" stroke-width="1.5"/><path d="M7.6 10.8 Q8.6 8.2 11.5 7.2" fill="none" stroke="#e01020" stroke-width="1.6"/></svg><div class="t" style="left:57px;top:71px">8000Гц (УЗД в октавной полосе со среднегеометрической частотой)</div></div>
<div class="abs" style="left:1219px;top:478px;width:16px;height:71px;background-color:#ece9e2;background-image:repeating-conic-gradient(#fff 0 25%,#d4d0c8 0 50%);background-size:2px 2px"></div>
<div class="abs" style="left:1219px;top:463px;width:16px;height:15px;background:#d4d0c8;border-top:1px solid #fff;border-left:1px solid #fff;border-right:1px solid #404040;border-bottom:1px solid #404040;box-shadow:inset -1px -1px 0 #808080"><svg class="abs" style="left:3px;top:4px" width="9" height="5" viewBox="0 0 9 5" ><path d="M0.5 4.5h7l-3.5-4z" fill="#000"/></svg></div>
<div class="abs" style="left:1219px;top:493px;width:16px;height:13px;background:#d4d0c8;border-top:1px solid #fff;border-left:1px solid #fff;border-right:1px solid #404040;border-bottom:1px solid #404040;box-shadow:inset -1px -1px 0 #808080"></div>
<div class="abs" style="left:1219px;top:534px;width:16px;height:15px;background:#d4d0c8;border-top:1px solid #fff;border-left:1px solid #fff;border-right:1px solid #404040;border-bottom:1px solid #404040;box-shadow:inset -1px -1px 0 #808080"><svg class="abs" style="left:3px;top:4px" width="9" height="5" viewBox="0 0 9 5" ><path d="M0.5 0.5h7l-3.5 4z" fill="#000"/></svg></div>
<div class="abs" style="left:851px;top:550px;width:368px;height:15px;background-color:#ece9e2;background-image:repeating-conic-gradient(#fff 0 25%,#d4d0c8 0 50%);background-size:2px 2px"></div>
<div class="abs" style="left:851px;top:550px;width:16px;height:15px;background:#d4d0c8;border-top:1px solid #fff;border-left:1px solid #fff;border-right:1px solid #404040;border-bottom:1px solid #404040;box-shadow:inset -1px -1px 0 #808080"><svg class="abs" style="left:4px;top:3px" width="5" height="9" viewBox="0 0 5 9" ><path d="M4.5 0.5v7l-4-3.5z" fill="#000"/></svg></div>
<div class="abs" style="left:867px;top:550px;width:273px;height:15px;background:#d4d0c8;border-top:1px solid #fff;border-left:1px solid #fff;border-right:1px solid #404040;border-bottom:1px solid #404040;box-shadow:inset -1px -1px 0 #808080"></div>
<div class="abs" style="left:1203px;top:550px;width:16px;height:15px;background:#d4d0c8;border-top:1px solid #fff;border-left:1px solid #fff;border-right:1px solid #404040;border-bottom:1px solid #404040;box-shadow:inset -1px -1px 0 #808080"><svg class="abs" style="left:5px;top:3px" width="5" height="9" viewBox="0 0 5 9" ><path d="M0.5 0.5v7l4-3.5z" fill="#000"/></svg></div>
<div class="abs" style="left:1219px;top:549px;width:16px;height:16px;background:#d4d0c8"></div>
<div class="abs" style="left:850px;top:577px;width:387px;height:62px;border:1px solid #0a246a"></div>
<div class="abs" style="left:857px;top:571px;width:104px;height:13px;background:#d4d0c8"></div>
<div class="t" style="left:859.4px;top:572px">Изолинии и флажки</div>
<div class="t" style="left:855.8px;top:593px">Параметр:</div>
<div class="abs" style="left:916px;top:590px;width:310px;height:19px;background:#fff;border:1px solid #0a246a"></div>
<div class="abs" style="left:918px;top:592px;width:290px;height:15px;background:#0a246a;outline:1px dotted #e8d890;outline-offset:-1px"></div>
<div class="t" style="left:918.6px;top:593px;color:#fff">Экранирование источника шума</div>
<div class="abs" style="left:1209px;top:592px;width:15px;height:15px;background:#d4d0c8"></div>
<svg class="abs" style="left:1212px;top:597px" width="9" height="5" viewBox="0 0 9 5" ><path d="M0 0h8l-4 4z" fill="#000"/></svg>
<div class="t" style="left:855.8px;top:617px">Высота:</div>
<div class="abs" style="left:902px;top:614px;width:106px;height:19px;background:#fff;border:1px solid #9c9a94"></div>
<div class="t" style="left:904px;top:617px">1.5</div>
<div class="abs" style="left:992px;top:616px;width:15px;height:15px;background:#d4d0c8"></div>
<svg class="abs" style="left:995px;top:621px" width="9" height="5" viewBox="0 0 9 5" ><path d="M0 0h8l-4 4z" fill="#000"/></svg>
<svg class="abs" style="left:0;top:0" width="1255" height="797" viewBox="0 0 1255 797"><path d="M993.7 379.7 C985 395 962 432 926.3 495.8" fill="none" stroke="#ff0000" stroke-width="6" stroke-linecap="round"/><path d="M1052.6 392.9 L961.6 588.2" fill="none" stroke="#ff0000" stroke-width="6" stroke-linecap="round"/></svg>
</body></html>
